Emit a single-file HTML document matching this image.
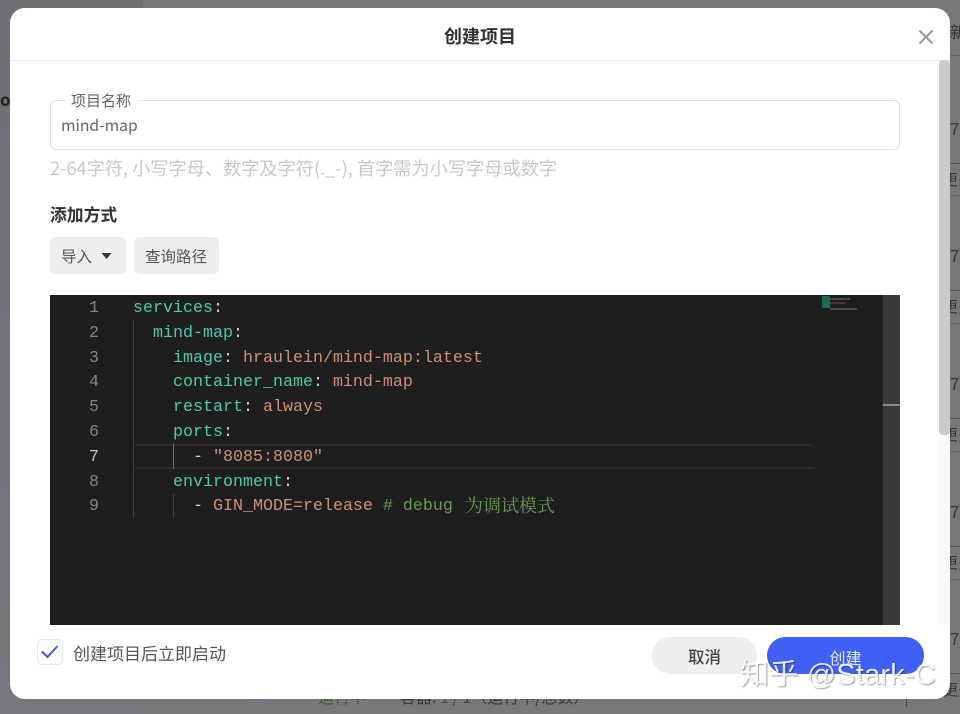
<!DOCTYPE html>
<html><head><meta charset="utf-8">
<style>
*{margin:0;padding:0;box-sizing:border-box}
html,body{width:960px;height:714px;overflow:hidden;background:#787878;font-family:"Noto Sans CJK SC","Liberation Sans",sans-serif;}
.a{position:absolute;white-space:nowrap}
#side{left:0;top:0;width:143px;height:714px;background:linear-gradient(#6f6f74,#77777c)}
#modal{left:10px;top:8px;width:940px;height:691px;background:#fff;border-radius:15px}
.code{font-family:"Liberation Mono","Noto Sans CJK SC",monospace;font-size:16.67px;line-height:25px}
.t{color:#4ec9b0}.s{color:#ce9178}.w{color:#d4d4d4}.n{color:#858585;width:30px;text-align:right;left:69px}
.c{color:#6a9955}
.g{background:#404040;width:1px}
.bar{background:#eeeef1;border-radius:6px;color:#444;font-size:16px;text-align:center}
.l{left:950px;width:10px;height:1px;background:#555}
.sv{left:943px;font-size:15px;color:#333;line-height:20px}
.sv7{left:950px;font-size:17px;color:#3a3a3a;line-height:22px}
</style></head><body>
<div class="a" id="side"></div>
<div class="a" style="left:0;top:87px;font-size:17px;font-weight:bold;color:#222;line-height:24px">o</div>
<div class="a" style="left:950px;top:20px;font-size:16px;color:#333;line-height:22px">新</div>
<div class="a l" style="top:55px;background:#666"></div>
<div class="a sv7" style="top:117px">7/</div>
<div class="a sv" style="top:170px">更多</div>
<div class="a sv7" style="top:244px">7/</div>
<div class="a sv" style="top:297px">更多</div>
<div class="a sv7" style="top:372px">7/</div>
<div class="a sv" style="top:425px">更多</div>
<div class="a sv7" style="top:500px">7/</div>
<div class="a sv" style="top:553px">更多</div>
<div class="a sv7" style="top:627px">7/</div>
<div class="a sv" style="top:680px">更多</div>
<div class="a l" style="top:163px"></div>
<div class="a l" style="top:195px;background:#666"></div>
<div class="a l" style="top:290px"></div>
<div class="a l" style="top:323px;background:#666"></div>
<div class="a l" style="top:418px"></div>
<div class="a l" style="top:451px;background:#666"></div>
<div class="a l" style="top:546px"></div>
<div class="a l" style="top:579px;background:#666"></div>
<div class="a l" style="top:673px"></div>
<div class="a" style="left:906px;top:699px;width:1px;height:8px;background:#444"></div>
<div class="a" style="left:252px;top:699px;width:12px;height:5px;background:#77718c;border-radius:0 0 6px 6px"></div>
<div class="a" style="left:318px;top:686px;font-size:16px;color:#3f5f2c;line-height:20px">运行中</div>
<div class="a" style="left:400px;top:686px;font-size:16px;color:#3a3a3a;line-height:20px">容器: <span style="color:#3f5f2c">1</span> / 1（运行中/总数）</div>

<div class="a" id="modal"></div>
<div class="a" style="left:10px;top:60px;width:940px;height:1px;background:#e6e6e8"></div>
<div class="a" style="left:0;width:960px;top:24px;text-align:center;font-size:18px;font-weight:bold;color:#303133;line-height:24px">创建项目</div>
<svg class="a" style="left:918px;top:29px" width="16" height="16" viewBox="0 0 16 16"><path d="M1.5 1.5L14.5 14.5M14.5 1.5L1.5 14.5" stroke="#9a9a9c" stroke-width="2" fill="none"/></svg>
<div class="a" style="left:939px;top:60px;width:11px;height:375px;background:#cbcbcb;border-radius:4px"></div>
<div class="a" style="left:939px;top:435px;width:11px;height:190px;background:#f9f9f9;border-radius:4px"></div>

<div class="a" style="left:50px;top:100px;width:850px;height:50px;border:1px solid #e2e2e4;border-radius:6px"></div>
<div class="a" style="left:65px;top:91px;padding:0 6px;background:#fff;font-size:15px;color:#666;line-height:20px">项目名称</div>
<div class="a" style="left:61px;top:114px;font-size:15.7px;color:#666;line-height:22px">mind-map</div>
<div class="a" style="left:50px;top:156px;font-size:18.2px;color:#c8c8ca;line-height:24px">2-64字符, 小写字母、数字及字符(._-), 首字需为小写字母或数字</div>
<div class="a" style="left:50px;top:203px;font-size:16.8px;font-weight:bold;color:#303133;line-height:22px">添加方式</div>
<div class="a bar" style="left:50px;top:237px;width:76px;height:37px"></div>
<div class="a" style="left:61px;top:246px;font-size:15.5px;color:#555;line-height:21px">导入</div>
<svg class="a" style="left:101px;top:252px" width="11" height="8"><path d="M0.5 1H10.5L5.5 7Z" fill="#333"/></svg>
<div class="a bar" style="left:134px;top:237px;width:85px;height:37px"></div>
<div class="a" style="left:145px;top:246px;font-size:15.5px;color:#555;line-height:21px">查询路径</div>

<div class="a" style="left:50px;top:295px;width:850px;height:330px;background:#1e1e1e"></div>
<div class="a" style="left:882px;top:295px;width:18px;height:330px;background:#3a3a3a;border-left:1px solid #2a2a2a"></div>
<div class="a" style="left:883px;top:404px;width:17px;height:2px;background:#8a8a8a"></div>
<div class="a" style="left:135px;top:444px;width:678px;height:25px;border-top:2px solid #2b2b2b;border-bottom:2px solid #2b2b2b"></div>
<div class="a g" style="left:133px;top:320px;height:198px"></div>
<div class="a g" style="left:173px;top:444px;height:25px;background:#707070"></div>
<div class="a g" style="left:173px;top:494px;height:24px"></div>
<div class="a" style="left:822px;top:296px;width:8px;height:12px;background:#1d6a5a"></div>
<div class="a" style="left:830px;top:298px;width:20px;height:2px;background:#4b4b4b"></div>
<div class="a" style="left:830px;top:302px;width:16px;height:2px;background:#50352c"></div>
<div class="a" style="left:830px;top:308px;width:27px;height:2px;background:#4a4a4a"></div>

<div class="code">
<div class="a n" style="top:296px">1</div>
<div class="a n" style="top:321px">2</div>
<div class="a n" style="top:346px">3</div>
<div class="a n" style="top:370px">4</div>
<div class="a n" style="top:395px">5</div>
<div class="a n" style="top:420px">6</div>
<div class="a n" style="top:445px;color:#c6c6c6">7</div>
<div class="a n" style="top:470px">8</div>
<div class="a n" style="top:494px">9</div>
<div class="a" style="left:133px;top:296px"><span class="t">services</span><span class="w">:</span></div>
<div class="a" style="left:153px;top:321px"><span class="t">mind-map</span><span class="w">:</span></div>
<div class="a" style="left:173px;top:346px"><span class="t">image</span><span class="w">: </span><span class="s">hraulein/mind-map:latest</span></div>
<div class="a" style="left:173px;top:370px"><span class="t">container_name</span><span class="w">: </span><span class="s">mind-map</span></div>
<div class="a" style="left:173px;top:395px"><span class="t">restart</span><span class="w">: </span><span class="s">always</span></div>
<div class="a" style="left:173px;top:420px"><span class="t">ports</span><span class="w">:</span></div>
<div class="a" style="left:193px;top:445px"><span class="w">- </span><span class="s">"8085:8080"</span></div>
<div class="a" style="left:173px;top:470px"><span class="t">environment</span><span class="w">:</span></div>
<div class="a" style="left:193px;top:494px"><span class="w">- </span><span class="s">GIN_MODE=release </span><span class="c"># debug</span></div>
<div class="a c" style="left:465px;top:493px;font-family:'Noto Serif CJK SC',serif;font-size:18px;line-height:25px">为调试模式</div>
</div>

<div class="a" style="left:37px;top:639px;width:26px;height:26px;border:1px solid #e8e8f0;border-radius:5px;background:#fdfdfe"></div>
<svg class="a" style="left:40px;top:643px" width="20" height="17"><path d="M2 8.5L7.5 14L17.5 3" stroke="#3f5be8" stroke-width="2" fill="none"/></svg>
<div class="a" style="left:73px;top:642px;font-size:17px;color:#555;line-height:22px">创建项目后立即启动</div>
<div class="a" style="left:652px;top:637px;width:105px;height:37px;background:#eeeef1;border-radius:19px"></div>
<div class="a" style="left:652px;top:645px;width:105px;text-align:center;font-size:16.5px;font-weight:500;color:#444;line-height:22px">取消</div>
<div class="a" style="left:767px;top:637px;width:157px;height:37px;background:#3f5ff5;border-radius:19px"></div>
<div class="a" style="left:767px;top:646px;width:157px;text-align:center;font-size:16px;color:#e8ecff;line-height:22px">创建</div>
<div class="a" style="left:740px;top:656px;font-family:'Liberation Sans','Noto Sans CJK SC',sans-serif;font-size:29px;line-height:38px;color:rgba(255,255,255,.88);text-shadow:1px 1px 1px rgba(0,0,0,.35);letter-spacing:.2px">知乎 @Stark-C</div>
</body></html>
